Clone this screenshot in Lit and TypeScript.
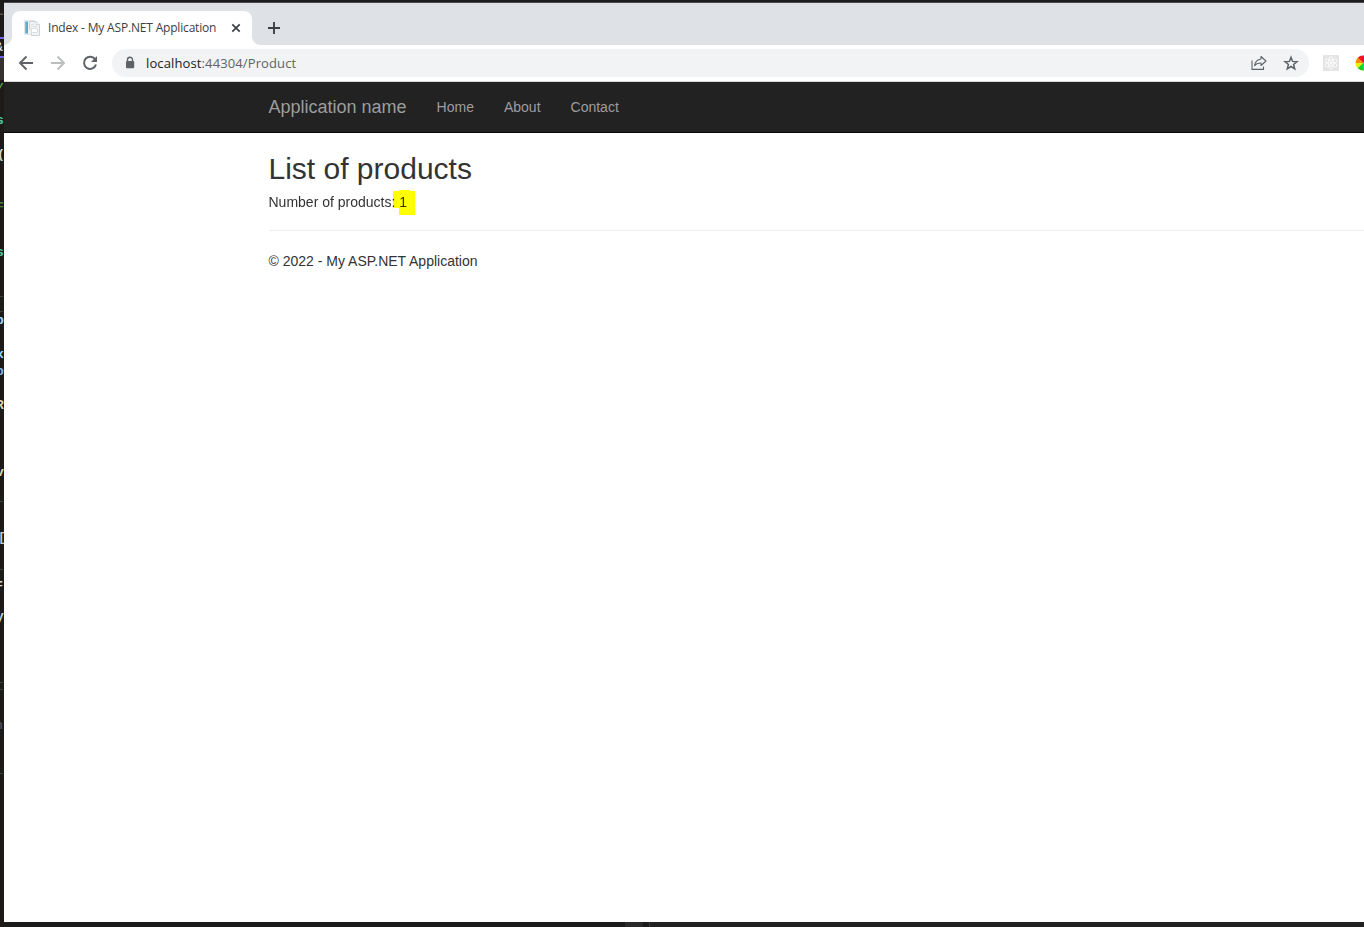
import { LitElement, html, css, svg } from "lit";
import { customElement } from "lit/decorators.js";

interface Mark { top: number; left: number; text: string; color: string; }

// Glyphs of the editor that show at the left of the browser window.
const MARKS: Mark[] = [
  { top: 4, left: -4, text: "L", color: "#55504a" },
  { top: 40, left: -5, text: "&", color: "#c8dcf0" },
  { top: 81, left: -4, text: "/", color: "#57a64a" },
  { top: 113, left: -4, text: "s", color: "#4ec9a0" },
  { top: 147, left: -3, text: "(", color: "#dcdcc8" },
  { top: 198, left: -4, text: "=", color: "#4a8040" },
  { top: 245, left: -4, text: "s", color: "#4ec9a0" },
  { top: 313, left: -4, text: "p", color: "#9cdcfe" },
  { top: 347, left: -4, text: "x", color: "#9cdcfe" },
  { top: 364, left: -4, text: "p", color: "#7ab8e8" },
  { top: 398, left: -4, text: "R", color: "#dcdcaa" },
  { top: 465, left: -4, text: "v", color: "#dcdcaa" },
  { top: 530, left: -2, text: "[", color: "#c8c8c8" },
  { top: 577, left: -5, text: "=", color: "#dcdcdc" },
  { top: 609, left: -4, text: "y", color: "#b8d8d0" },
  { top: 718, left: -5, text: "n", color: "#4a4a55" },
];
const RULES = [296, 311, 501, 569, 682, 689, 773];
// Wheel colours run counter-clockwise from the top.
const WHEEL = ["#f01818", "#ff8a00", "#e8f000", "#20d020", "#00d8c0", "#1060e0", "#7020d0", "#d000a0"];

@customElement("editor-edge")
class EditorEdge extends LitElement {
  static styles = css`
    :host { display: block; position: relative; overflow: hidden; background: #1c1b1a;
      font: bold 13px/16px "Liberation Mono", monospace; }
    .mark, .rule, .block { position: absolute; }
    .rule { left: 0; width: 3px; height: 1px; background: #3f3f3f; }
    .band { position: absolute; left: 0; top: 37px; width: 4px; height: 21px; box-sizing: border-box;
      border-top: 2px solid #7160e8; border-bottom: 2px solid #7160e8; }
    .block { left: 0; top: 58px; width: 4px; height: 22px; background: #343332; }
  `;
  render() {
    return html`<div class="band"></div><div class="block"></div>
      ${MARKS.map(m => html`<span class="mark" style="top:${m.top}px;left:${m.left}px;color:${m.color}">${m.text}</span>`)}
      ${RULES.map(y => html`<span class="rule" style="top:${y}px"></span>`)}`;
  }
}

@customElement("browser-chrome")
class BrowserChrome extends LitElement {
  static styles = css`
    :host { display: block; font-family: "Open Sans", "Noto Sans", sans-serif; }
    svg { display: block; flex: none; }
    .tabs { display: flex; height: 42px; padding: 8px 0 0 8px; box-sizing: border-box; background: #dee1e6; }
    .tab { position: relative; display: flex; align-items: center; width: 240px; height: 34px; box-sizing: border-box;
      padding: 0 9px 0 12px; background: #fff; border-radius: 8px 8px 0 0; color: #3c4043; font-size: 12px; }
    .tab::before, .tab::after { content: ""; position: absolute; bottom: 0; width: 8px; height: 8px; }
    .tab::before { left: -8px; background: radial-gradient(circle at 0 0, transparent 7.5px, #fff 8px); }
    .tab::after { right: -8px; background: radial-gradient(circle at 100% 0, transparent 7.5px, #fff 8px); }
    .title { flex: 1; margin-left: 8px; padding-bottom: 2px; white-space: nowrap; letter-spacing: -0.18px; }
    .add { margin: 9px 0 0 14px; }
    .bar { display: flex; align-items: center; height: 37px; box-sizing: border-box; border-bottom: 1px solid #d5d7da;
      padding-left: 14px; background: #fff; }
    .nav { display: flex; gap: 16px; }
    .nav svg { width: 16px; height: 16px; }
    .address { display: flex; align-items: center; width: 1197px; height: 28px; box-sizing: border-box; margin-left: 14px;
      padding: 0 10px 0 10px; border-radius: 14px; background: #f1f3f4; font-size: 13px; flex: none; }
    .url { flex: 1; margin-left: 8px; color: #5f6368; white-space: nowrap; letter-spacing: 0.12px; }
    .host { color: #202124; }
    .share { margin-right: 16px; }
    .react { margin-left: 14px; }
    .wheel { margin-left: 16px; }
  `;
  render() {
    return html`
      <div class="tabs">
        <div class="tab">
          <svg width="16" height="16" viewBox="0 0 16 16">
            <path d="M.5.5h10v14H.5z" fill="#edf3f7" stroke="#dfe5e9"/><path d="M1.300 1.500h2.700v12H1.300z" fill="#5ba8d4"/>
            <path d="M5.500 1.500h6.500l3.500 3v11H7.500V9h-2z" fill="#f0f2f4" stroke="#d0d4d8"/><path d="M12 1.500v3h3" fill="#fff" stroke="#d0d4d8"/>
            <path d="M7.500 8.500h6v4h-6z" fill="#fff" stroke="#dde0e3"/><path d="M7 4.500h3M7 6.500h6" stroke="#dde0e3"/>
          </svg>
          <span class="title">Index - My ASP.NET Application</span>
          <svg width="14" height="14" viewBox="0 0 14 14"><path d="M3.300 3.300l7.400 7.400M10.700 3.300l-7.400 7.400" stroke="#3c4043" stroke-width="1.700"/></svg>
        </div>
        <svg class="add" width="16" height="16" viewBox="0 0 16 16"><path d="M8 2v12M2 8h12" stroke="#3c4043" stroke-width="1.900"/></svg>
      </div>
      <div class="bar">
        <div class="nav">
          <svg viewBox="0 0 16 16"><path d="M15 8H2.500M8.500 1.500L2 8l6.500 6.500" fill="none" stroke="#5f6368" stroke-width="1.900"/></svg>
          <svg viewBox="0 0 16 16"><path d="M1 8h12.500M7.500 1.500L14 8l-6.500 6.500" fill="none" stroke="#babcbe" stroke-width="1.900"/></svg>
          <svg viewBox="0 0 16 16"><path d="M13.300 4.500A6.100 6.100 0 1 0 14 9.500" fill="none" stroke="#5f6368" stroke-width="2"/><path d="M15 1v6H9z" fill="#5f6368"/></svg>
        </div>
        <div class="address">
          <svg width="16" height="16" viewBox="0 0 16 16"><path d="M5.500 6.500V4.700a2.500 2.500 0 0 1 5 0v1.800" fill="none" stroke="#5f6368" stroke-width="1.400"/><rect x="4" y="6" width="8.200" height="7.200" rx="1" fill="#5f6368"/></svg>
          <span class="url"><span class="host">localhost</span>:44304/Product</span>
          <svg class="share" width="16" height="16" viewBox="0 0 16 16" fill="none" stroke="#5f6368" stroke-width="1.100"><path d="M1 5.500v8.900h11.500v-3"/><path d="M10 1.500L15 6l-5 4.500V8C7 7.700 5 8.700 3.500 10.700 4 7 6.500 4.500 10 4z" stroke-linejoin="round"/></svg>
          <svg width="16" height="16" viewBox="0 0 16 16"><path d="M8 2.300l1.600 4.100 4.400.3-3.400 2.800 1.100 4.300L8 11.500l-3.700 2.300 1.100-4.300L2 6.700l4.400-.3z" fill="none" stroke="#5f6368" stroke-width="1.500"/></svg>
        </div>
        <svg class="react" width="16" height="16" viewBox="0 0 16 16"><path d="M0 0h16v16H0z" fill="#e4e4e4"/>
          <g fill="none" stroke="#fafafa" stroke-width=".9">
            ${[30, 90, 150].map(a => svg`<ellipse cx="8" cy="8" rx="6.500" ry="2.500" transform="rotate(${a} 8 8)"/>`)}
          </g><circle cx="8" cy="8" r="1.300" fill="#fafafa"/></svg>
        <svg class="wheel" width="16" height="16" viewBox="0 0 16 16">
          ${WHEEL.map((c, i) => {
            const a = (i * Math.PI) / 4, b = a + Math.PI / 4;
            return svg`<path d="M8 8L${8 - 7.5 * Math.sin(a)} ${8 - 7.5 * Math.cos(a)}A7.500 7.500 0 0 0 ${8 - 7.5 * Math.sin(b)} ${8 - 7.5 * Math.cos(b)}z" fill=${c}/>`;
          })}
        </svg>
      </div>`;
  }
}

@customElement("product-page")
class ProductPage extends LitElement {
  static styles = css`
    :host { display: block; background: #fff; color: #333; font: 14px/20px "Liberation Sans", Arial, sans-serif; }
    .navbar { display: flex; height: 51px; box-sizing: border-box; padding-left: 264.5px; background: #222;
      border-bottom: 1px solid #080808; color: #9d9d9d; line-height: 20px; }
    .brand { padding: 15px 15px 15px 0; font-size: 18px; }
    .link { padding: 15px; }
    .body { padding-left: 264.5px; }
    h2 { margin: 0; padding-top: 19px; font-size: 30px; font-weight: 400; line-height: 33px; }
    .count { display: flex; margin-top: 7px; isolation: isolate; }
    .label, .value { white-space: pre; }
    .value { position: relative; }
    .value svg { position: absolute; left: -6px; top: -2px; mix-blend-mode: multiply; }
    hr { margin: 18px 0 20px; border: 0; border-top: 1px solid #eee; }
    p { margin: 0; }
  `;
  render() {
    return html`
      <nav class="navbar"><span class="brand">Application name</span><span class="link">Home</span><span class="link">About</span><span class="link">Contact</span></nav>
      <main class="body">
        <h2>List of products</h2>
        <div class="count"><span class="label">Number of products: </span><span class="value">1<svg width="22" height="27" viewBox="0 0 22 27"><path d="M0 1h6V0h11v1h5v24H6v-7H0z" fill="#ff0"/></svg></span></div>
        <hr><p>© 2022 - My ASP.NET Application</p>
      </main>`;
  }
}

@customElement("app-root")
class AppRoot extends LitElement {
  static styles = css`
    :host { display: grid; grid-template-columns: 4px 1360px; grid-template-rows: 3px 919px 5px;
      width: 1364px; height: 927px; overflow: hidden; background: #1c1b1c; }
    .edge { grid-area: 1 / 1 / 4 / 2; }
    .top { grid-area: 1 / 2; border-bottom: 1px solid #4b4b4d; height: 2px; }
    .window { grid-area: 2 / 2; display: flex; flex-direction: column; overflow: hidden; }
    .page { flex: 1; }
    .foot { grid-area: 3 / 2; display: grid; grid-template-columns: 621px 18px 6px 1fr; }
    .thumb { background: #2b2a2b; }
    .pane { border-left: 1px solid #3a393a; background: #222122; }
  `;
  render() {
    return html`<editor-edge class="edge"></editor-edge><div class="top"></div>
      <div class="window"><browser-chrome></browser-chrome><product-page class="page"></product-page></div>
      <div class="foot"><i></i><i class="thumb"></i><i></i><i class="pane"></i></div>`;
  }
}
